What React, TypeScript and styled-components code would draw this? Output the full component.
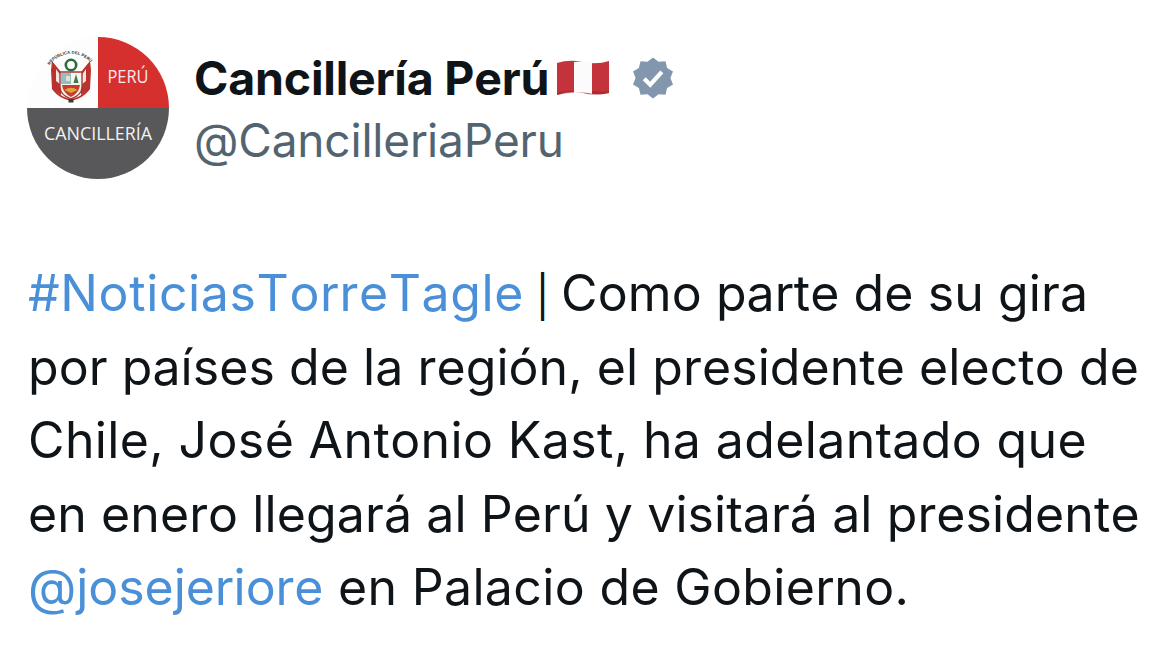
import React from "react";
import styled, { createGlobalStyle } from "styled-components";

const Global = createGlobalStyle`
  html, body { margin: 0; padding: 0; background: #fff; }
  body { font-family: Inter, "Liberation Sans", sans-serif; overflow: hidden; font-kerning: none; }
`;
const Page = styled.main`
  width: 1170px; height: 671px; box-sizing: border-box; padding: 37px 20px 0 28px; background: #fff; color: #0f1419;
`;
const Header = styled.header`
  display: flex; align-items: flex-start; gap: 25px; height: 142px; margin-left: -1px;
`;
const Identity = styled.div`
  display: flex; flex-direction: column; padding-top: 14px;
`;
const NameRow = styled.div`
  display: flex; align-items: center; height: 54px;
`;
const Name = styled.span`
  font-size: 46.5px; font-weight: 700; letter-spacing: -0.2px; line-height: 54px; color: #0f1419;
`;
const Handle = styled.span`
  font-size: 46px; font-weight: 400; letter-spacing: -0.18px; line-height: 54px; margin-top: 8px; color: #536471;
`;
const Body = styled.div`
  margin-top: 78px; font-size: 50px; line-height: 73.6px; font-weight: 400; color: #0f1419; white-space: nowrap;
`;
const Line = styled.p<{ $tracking: number }>`
  margin: 0; letter-spacing: ${(p) => p.$tracking}px;
`;
const Link = styled.span<{ $tracking: number }>`
  color: #4a90d9; letter-spacing: ${(p) => p.$tracking}px;
`;
const Pipe = styled.span`
  font-size: 41px; font-weight: 400; line-height: 0; white-space: pre;
`;
const Flag = styled.svg`
  width: 54px; height: 38px; margin-left: 7px; flex: none;
`;
const Badge = styled.svg`
  width: 44px; height: 44px; margin-left: 21px; flex: none;
`;
const AvatarSvg = styled.svg`
  width: 142px; height: 142px; flex: none; display: block;
`;

const Avatar = () => (
  <AvatarSvg viewBox="0 0 142 142">
    <defs>
      <clipPath id="c"><circle cx="71" cy="71" r="71" /></clipPath>
      <path id="arc" d="M22 29 A 26 26 0 0 1 66 29" fill="none" />
    </defs>
    <g clipPath="url(#c)">
      <rect width="142" height="71" fill="#fdfdfd" />
      <rect x="71" width="71" height="71" fill="#d6302e" />
      <rect y="71" width="142" height="71" fill="#58585a" />
    </g>
    <text x="101" y="46" textAnchor="middle" textLength="41" lengthAdjust="spacingAndGlyphs" fontFamily="'Open Sans', sans-serif" fontSize="18" fill="#fbeaea">PERÚ</text>
    <text x="71" y="103" textAnchor="middle" fontFamily="'Open Sans', sans-serif" fontSize="18.5" textLength="108" lengthAdjust="spacingAndGlyphs" fill="#f2f2f2">CANCILLERÍA</text>
    <text fontFamily="'Liberation Sans', sans-serif" fontSize="4.2" fontWeight="700" fill="#333">
      <textPath href="#arc" startOffset="1" textLength="47">REPÚBLICA DEL PERÚ</textPath>
    </text>
    <path d="M34 35 L25 24 L24 33 L25 52 L34 58Z M54 35 L63 24 L64 33 L63 52 L54 58Z" fill="#b9322d" />
    <path d="M29 32 L34 39 V48 L29 44Z M59 32 L54 39 V48 L59 44Z" fill="#f3e4e0" />
    <circle cx="44" cy="28" r="5.2" fill="none" stroke="#2c6a3b" strokeWidth="2.6" />
    <path d="M33 35 H55 V50 Q55 58 44 62 Q33 58 33 50Z" fill="#f6f3e8" stroke="#a53a32" strokeWidth="1.4" />
    <rect x="34" y="36" width="10" height="11" fill="#8fc0c9" />
    <rect x="44" y="36" width="10" height="11" fill="#f7f7f2" />
    <path d="M49 37 L51.5 46 H46.5Z" fill="#3f7a45" />
    <path d="M39 39 h4 v5 h-4Z" fill="#e8e2c4" />
    <path d="M35 48 H53 Q52 56 44 60 Q36 56 35 48Z" fill="#c83a32" />
    <path d="M37.5 53 Q44 48.5 50.5 53 L44 56Z" fill="#d9a93a" />
    <path d="M26 52 Q33 61 44 63 Q55 61 62 52" fill="none" stroke="#b9322d" strokeWidth="2" />
    <rect x="41.5" y="62" width="5" height="3.5" fill="#3a3a3a" />
  </AvatarSvg>
);

const PeruFlag = () => (
  <Flag viewBox="0 0 54 38">
    <path d="M1 4 Q13 0 27 3 T53 2 V34 Q40 37 27 34 T1 36Z" fill="#c4333b" />
    <path d="M18 3 Q27 2 36 3.6 V34.8 Q27 33 18 33.8Z" fill="#fbfbfb" />
    <path d="M1 33.5 Q13 31 18 31.5 V33.8 Q10 34 1 36Z M36 32 Q45 33 53 32 V34 Q45 36 36 34.8Z" fill="#8e2229" opacity=".45" />
  </Flag>
);

const Verified = () => (
  <Badge viewBox="0 0 24 24">
    <path fill="#8296ad" d="M12 .8l3 2.3 3.8-.3.9 3.7 3.2 2-1.4 3.5 1.4 3.5-3.2 2-.9 3.7-3.8-.3-3 2.3-3-2.3-3.8.3-.9-3.7-3.2-2 1.4-3.5-1.4-3.5 3.2-2 .9-3.7 3.8.3z" />
    <path d="M7.2 12.4l3.3 3.3 6.3-7" fill="none" stroke="#fff" strokeWidth="2.3" />
  </Badge>
);

export default function App() {
  return (
    <Page>
      <Global />
      <Header>
        <Avatar />
        <Identity>
          <NameRow>
            <Name>Cancillería Perú</Name>
            <PeruFlag />
            <Verified />
          </NameRow>
          <Handle>@CancilleriaPeru</Handle>
        </Identity>
      </Header>
      <Body>
        <Line $tracking={0.1}>
          <Link $tracking={0.62}>#NoticiasTorreTagle</Link>
          <Pipe>{" | "}</Pipe>
          Como parte de su gira
        </Line>
        <Line $tracking={0.07}>por países de la región, el presidente electo de</Line>
        <Line $tracking={0.38}>Chile, José Antonio Kast, ha adelantado que</Line>
        <Line $tracking={0.1}>en enero llegará al Perú y visitará al presidente</Line>
        <Line $tracking={0.35}>
          <Link $tracking={-0.05}>@josejeriore</Link> en Palacio de Gobierno.
        </Line>
      </Body>
    </Page>
  );
}
